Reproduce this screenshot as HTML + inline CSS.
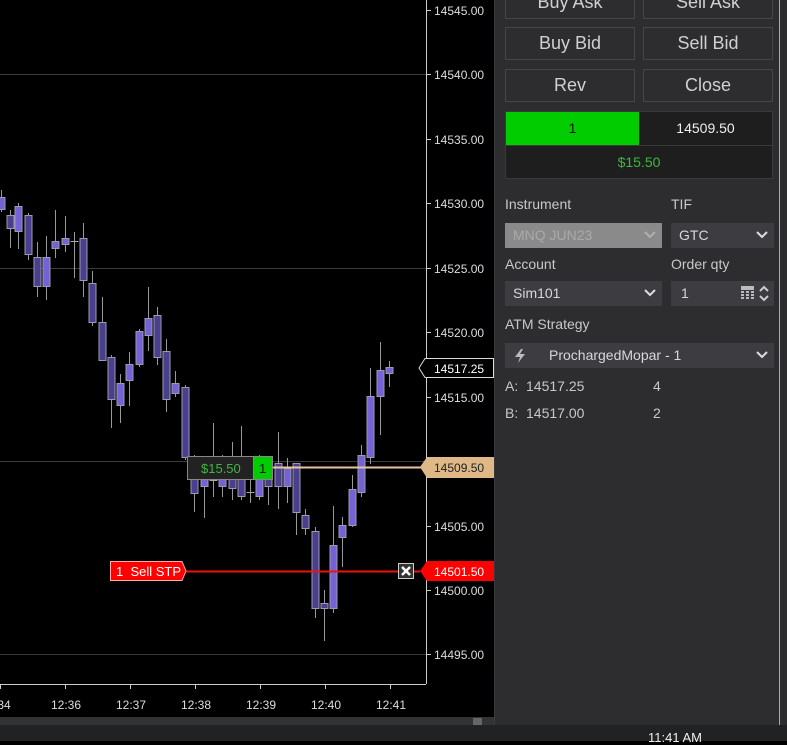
<!DOCTYPE html>
<html><head><meta charset="utf-8"><style>
*{margin:0;padding:0;box-sizing:border-box}
body{width:787px;height:741px;overflow:hidden;background:#000;font-family:"Liberation Sans",sans-serif;position:relative}
.abs{position:absolute}
#panel{left:494px;top:0;width:293px;height:725px;background:#2d2d30;border-left:1px solid #3a3a3e}
.btn{position:absolute;width:130px;height:33px;background:#2d2d30;border:1px solid #45454a;color:#d0d0d0;font-size:18px;text-align:center;line-height:31px}
.lbl{position:absolute;color:#c8c8c8;font-size:14px}
.dd{position:absolute;height:25px;background:#3c3c41;color:#d8d8d8;font-size:14px;line-height:25px;padding-left:8px}
.chev{position:absolute;right:6px;top:8px}
</style></head><body>
<svg class="abs" style="left:0;top:0" width="494" height="725">
<g stroke="#3a3a3a" stroke-width="1">
<line x1="0" y1="74.5" x2="426" y2="74.5"/><line x1="0" y1="268.5" x2="426" y2="268.5"/><line x1="0" y1="461.5" x2="426" y2="461.5"/><line x1="0" y1="654.5" x2="426" y2="654.5"/>
</g>
<g stroke="#ccc" stroke-width="1">
<line x1="426.5" y1="0" x2="426.5" y2="684"/><line x1="0" y1="684.5" x2="426" y2="684.5"/>
<line x1="426" y1="10.5" x2="431" y2="10.5"/><line x1="426" y1="74.5" x2="431" y2="74.5"/><line x1="426" y1="139.5" x2="431" y2="139.5"/><line x1="426" y1="203.5" x2="431" y2="203.5"/><line x1="426" y1="268.5" x2="431" y2="268.5"/><line x1="426" y1="332.5" x2="431" y2="332.5"/><line x1="426" y1="397.5" x2="431" y2="397.5"/><line x1="426" y1="526.5" x2="431" y2="526.5"/><line x1="426" y1="590.5" x2="431" y2="590.5"/><line x1="426" y1="654.5" x2="431" y2="654.5"/>
<line x1="0.5" y1="684" x2="0.5" y2="689"/><line x1="65.5" y1="684" x2="65.5" y2="689"/><line x1="130.5" y1="684" x2="130.5" y2="689"/><line x1="195.5" y1="684" x2="195.5" y2="689"/><line x1="260.5" y1="684" x2="260.5" y2="689"/><line x1="325.5" y1="684" x2="325.5" y2="689"/><line x1="390.5" y1="684" x2="390.5" y2="689"/>
</g>
<g fill="#ddd" font-size="12" font-family="Liberation Sans">
<text x="434" y="15">14545.00</text><text x="434" y="79">14540.00</text><text x="434" y="144">14535.00</text><text x="434" y="208">14530.00</text><text x="434" y="273">14525.00</text><text x="434" y="337">14520.00</text><text x="434" y="402">14515.00</text><text x="434" y="531">14505.00</text><text x="434" y="595">14500.00</text><text x="434" y="659">14495.00</text>
<text x="-6" y="709">:34</text><text x="51" y="709">12:36</text><text x="116" y="709">12:37</text><text x="181" y="709">12:38</text><text x="246" y="709">12:39</text><text x="311" y="709">12:40</text><text x="376" y="709">12:41</text>
</g>
<g id="c"></g>
<line x1="273" y1="467.5" x2="422" y2="467.5" stroke="#e8c4a4" stroke-width="2"/>
<rect x="187.5" y="456.5" width="66" height="23" fill="#222" stroke="#888"/>
<text x="201" y="473" fill="#3fb53f" font-size="13">$15.50</text>
<rect x="253.5" y="456.5" width="19" height="23" fill="#00cc00" stroke="#888"/>
<text x="259" y="473" fill="#111" font-size="13">1</text>
<polygon points="420,467 427,457 494,457 494,478 427,478" fill="#deb887"/>
<text x="434" y="472" fill="#222" font-size="12">14509.50</text>
<line x1="185" y1="571.5" x2="420" y2="571.5" stroke="#ee1111" stroke-width="2"/>
<polygon points="110.5,561.5 182,561.5 186,571 182,580.5 110.5,580.5" fill="#ff0000" stroke="#ffaaaa"/>
<text x="116" y="576" fill="#fff" font-size="13">1&#160; Sell STP</text>
<rect x="398.5" y="563.5" width="15" height="15" fill="#333" stroke="#ccc"/>
<path d="M402 567 L410 575 M410 567 L402 575" stroke="#fff" stroke-width="2.5"/>
<polygon points="420,571 427,561 494,561 494,581 427,581" fill="#ff0000"/>
<text x="434" y="576" fill="#fff" font-size="12">14501.50</text>
<polygon points="419,368 425,358.5 493.5,358.5 493.5,377.5 425,377.5" fill="#000" stroke="#ddd"/>
<text x="434" y="373" fill="#fff" font-size="12">14517.25</text>
</svg>
<div class="abs" style="left:0;top:717px;width:494px;height:8px;background:#333"></div>
<div class="abs" style="left:473px;top:718px;width:9px;height:7px;background:#666"></div>
<div class="abs" style="left:0;top:725px;width:787px;height:16px;background:#202224"></div>
<div class="abs" style="left:648px;top:730px;color:#eee;font-size:13px">11:41 AM</div>
<div id="panel" class="abs">
<div class="btn" style="left:10px;top:-14px">Buy Ask</div>
<div class="btn" style="left:148px;top:-14px">Sell Ask</div>
<div class="btn" style="left:10px;top:27px">Buy Bid</div>
<div class="btn" style="left:148px;top:27px">Sell Bid</div>
<div class="btn" style="left:10px;top:69px">Rev</div>
<div class="btn" style="left:148px;top:69px">Close</div>
<div class="abs" style="left:10px;top:111px;width:268px;height:68px;background:#1e1e1e;border:1px solid #3a3a3a"></div>
<div class="abs" style="left:11px;top:112px;width:133px;height:33px;background:#00cc00;color:#111;font-size:14px;text-align:center;line-height:32px">1</div>
<div class="abs" style="left:144px;top:112px;width:133px;height:33px;color:#eee;font-size:14px;text-align:center;line-height:32px">14509.50</div>
<div class="abs" style="left:11px;top:145px;width:266px;height:1px;background:#3a3a3a"></div>
<div class="abs" style="left:11px;top:146px;width:266px;height:32px;color:#3fb53f;font-size:14px;text-align:center;line-height:32px">$15.50</div>
<div class="lbl" style="left:10px;top:196px">Instrument</div>
<div class="lbl" style="left:176px;top:196px">TIF</div>
<div class="dd" style="left:10px;top:223px;width:157px;background:#8a8a8a;color:#aaa">MNQ JUN23<svg class="chev" width="12" height="8"><polyline points="1,1 6,6 11,1" fill="none" stroke="#b0b0b0" stroke-width="2"/></svg></div>
<div class="dd" style="left:176px;top:223px;width:103px">GTC<svg class="chev" width="12" height="8"><polyline points="1,1 6,6 11,1" fill="none" stroke="#ddd" stroke-width="2"/></svg></div>
<div class="lbl" style="left:10px;top:256px">Account</div>
<div class="lbl" style="left:176px;top:256px">Order qty</div>
<div class="dd" style="left:10px;top:281px;width:157px">Sim101<svg class="chev" width="12" height="8"><polyline points="1,1 6,6 11,1" fill="none" stroke="#ddd" stroke-width="2"/></svg></div>
<div class="dd" style="left:176px;top:281px;width:103px;padding-left:10px">1
<svg class="abs" style="left:70px;top:5px" width="13" height="14"><g fill="#bbb"><rect x="0" y="0" width="13" height="4"/><rect x="0" y="5" width="3" height="2"/><rect x="5" y="5" width="3" height="2"/><rect x="10" y="5" width="3" height="2"/><rect x="0" y="8" width="3" height="2"/><rect x="5" y="8" width="3" height="2"/><rect x="10" y="8" width="3" height="2"/><rect x="0" y="11" width="3" height="2"/><rect x="5" y="11" width="3" height="2"/><rect x="10" y="11" width="3" height="2"/></g></svg>
<svg class="abs" style="left:88px;top:4px" width="10" height="17"><polyline points="1,6 5,2 9,6" fill="none" stroke="#ccc" stroke-width="2"/><polyline points="1,11 5,15 9,11" fill="none" stroke="#ccc" stroke-width="2"/></svg></div>
<div class="lbl" style="left:10px;top:316px">ATM Strategy</div>
<div class="dd" style="left:10px;top:343px;width:269px"><svg class="abs" style="left:9px;top:6px" width="12" height="14"><polygon points="7,0 1,8 6,8 4,14 11,5 6,5 9,0" fill="#bbb"/></svg><span style="position:absolute;left:44px">ProchargedMopar - 1</span><svg class="chev" width="12" height="8"><polyline points="1,1 6,6 11,1" fill="none" stroke="#ddd" stroke-width="2"/></svg></div>
<div class="lbl" style="left:10px;top:378px">A:&nbsp; 14517.25</div>
<div class="lbl" style="left:158px;top:378px">4</div>
<div class="lbl" style="left:10px;top:405px">B:&nbsp; 14517.00</div>
<div class="lbl" style="left:158px;top:405px">2</div>
<div class="abs" style="left:284px;top:0;width:1px;height:725px;background:#aaa"></div>
</div>
<script>
var d=[[1,197,209,190,212,1],[9.5,215,228,210,248,0],[18,206,231,203,249,1],[28,215,254,213,260,0],[37,257,286,242,297,0],[46,257,286,236,300,1],[55,241,248,210,258,1],[65,238,244,216,252,1],[74,241,241,232,278,0],[83,238,280,223,297,0],[92,283,322,271,326,0],[102,322,360,297,360,0],[111,357,399,355,428,0],[120,383,405,374,423,1],[129,364,380,352,406,1],[139,331,364,329,367,1],[148,318,335,287,351,1],[157,315,357,307,365,0],[166,351,399,339,412,0],[175,383,393,371,397,1],[185,387,457,385,460,0],[194,470,493,455,512,0],[204,470,486,458,518,1],[213,480,480,423,497,0],[222,478,486,455,497,1],[232,478,488,442,500,0],[241,463,496,426,500,0],[250,492,492,470,503,0],[259,470,496,455,500,1],[268,475,486,460,505,0],[278,463,486,432,509,0],[287,468,486,458,503,1],[296,463,512,463,535,0],[305,515,528,509,535,0],[315,531,608,527,618,0],[324,603,608,590,641,0],[333,545,608,506,613,1],[342,525,537,517,567,1],[352,489,525,475,527,1],[361,455,492,445,497,1],[370,396,457,368,464,1],[380,370,396,342,435,1],[389,367,373,361,387,1]];
var s='';d.forEach(function(c){var x=Math.round(c[0])+0.5;s+='<line x1="'+x+'" y1="'+c[3]+'" x2="'+x+'" y2="'+c[4]+'" stroke="#999"/>';if(c[2]-c[1]<2){s+='<line x1="'+(x-4)+'" y1="'+(c[1]+.5)+'" x2="'+(x+4)+'" y2="'+(c[1]+.5)+'" stroke="#aaa"/>';}else{s+='<rect x="'+(x-3.5)+'" y="'+(c[1]+.5)+'" width="7" height="'+(c[2]-c[1])+'" fill="'+(c[5]?'#7563d6':'#4a3f8e')+'" stroke="#9a9ab0" stroke-width="1"/>';}});
document.getElementById('c').innerHTML=s;
</script>
</body></html>
